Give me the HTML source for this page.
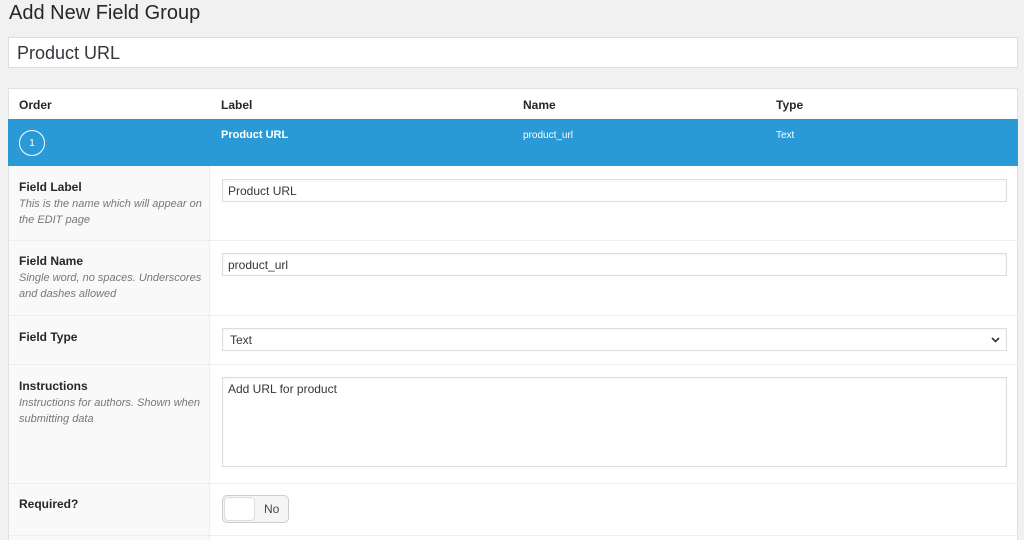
<!DOCTYPE html>
<html style="overflow:hidden;height:540px"><head><style>
*{box-sizing:border-box;margin:0;padding:0}
body{width:1024px;height:540px;overflow:hidden;background:#f1f1f1;font-family:"Liberation Sans",sans-serif;color:#23282d;position:relative}
.a{position:absolute}
h1{position:absolute;left:9px;top:2px;font-size:20px;font-weight:400;color:#23282d}
.title{left:8px;top:37px;width:1010px;height:31px;background:#fff;border:1px solid #ddd;font-size:18px;padding:5px 8px;color:#32373c}
.panel{left:8px;top:88px;width:1010px;height:452px;background:#fff;border:1px solid #e1e1e1;border-bottom:none}
.hd{font-size:12px;font-weight:bold;top:98px}
.blue{left:8px;top:119px;width:1010px;height:47px;background:#2a9ad6}
.circ{left:19px;top:130px;width:26px;height:26px;border:1px solid #fff;border-radius:50%;color:#fff;font-size:10px;display:flex;align-items:center;justify-content:center}
.bt{color:#fff;font-size:11px;top:129px}
.left{left:9px;top:166px;width:201px;height:374px;background:#f9f9f9;border-right:1px solid #eee}
.line{left:9px;width:1008px;height:1px;background:#eee}
.lb{left:19px;font-size:12px;font-weight:bold}
.ds{left:19px;font-size:11px;font-style:italic;color:#777;line-height:16px;width:190px}
.in{left:222px;width:785px;height:23px;border:1px solid #ddd;background:#fff;font-size:12px;padding:4px 5px;color:#32373c;box-shadow:inset 0 1px 2px rgba(0,0,0,.05)}
</style></head><body>
<h1>Add New Field Group</h1>
<div class="a title">Product URL</div>
<div class="a panel"></div>
<div class="a hd" style="left:19px">Order</div>
<div class="a hd" style="left:221px">Label</div>
<div class="a hd" style="left:523px">Name</div>
<div class="a hd" style="left:776px">Type</div>
<div class="a blue"></div>
<div class="a circ">1</div>
<div class="a bt" style="left:221px;font-weight:bold">Product URL</div>
<div class="a bt" style="left:523px;font-size:10px;top:130px">product_url</div>
<div class="a bt" style="left:776px;font-size:10px;top:130px">Text</div>
<div class="a left"></div>
<div class="a line" style="top:240px"></div>
<div class="a line" style="top:315px"></div>
<div class="a line" style="top:364px"></div>
<div class="a line" style="top:483px"></div>
<div class="a line" style="top:535px"></div>
<div class="a lb" style="top:180px">Field Label</div>
<div class="a ds" style="top:196px">This is the name which will appear on the EDIT page</div>
<div class="a in" style="top:179px">Product URL</div>
<div class="a lb" style="top:254px">Field Name</div>
<div class="a ds" style="top:270px">Single word, no spaces. Underscores and dashes allowed</div>
<div class="a in" style="top:253px">product_url</div>
<div class="a lb" style="top:330px">Field Type</div>
<div class="a in" style="top:328px;padding-left:7px">Text<svg style="position:absolute;right:6px;top:8px" width="9" height="6" viewBox="0 0 9 6"><path d="M1 1l3.5 3.5L8 1" fill="none" stroke="#333" stroke-width="1.6"/></svg></div>
<div class="a lb" style="top:379px">Instructions</div>
<div class="a ds" style="top:395px">Instructions for authors. Shown when submitting data</div>
<div class="a in" style="top:377px;height:90px">Add URL for product</div>
<div class="a lb" style="top:497px">Required?</div>
<div class="a" style="left:222px;top:495px;width:67px;height:28px;border:1px solid #ccc;border-radius:5px;background:#f5f5f5"></div>
<div class="a" style="left:224px;top:497px;width:31px;height:24px;border:1px solid #ddd;border-radius:4px;background:#fff"></div>
<div class="a" style="left:264px;top:502px;font-size:12px;color:#444">No</div>
</body></html>
